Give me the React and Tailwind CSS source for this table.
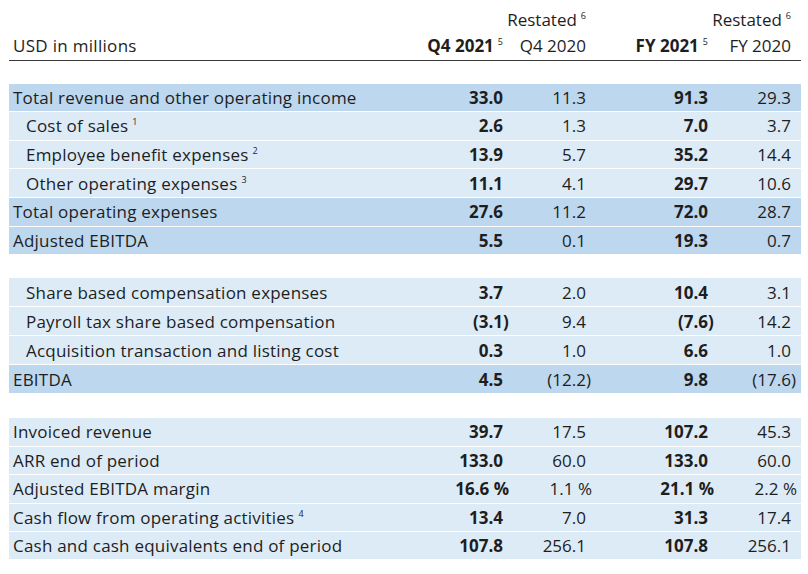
import React from "react";

const DARK = "bg-[#bdd7ee]";
const LIGHT = "bg-[#ddebf7]";

function Sup({ n }) {
  return <span className="relative -top-[7px] ml-[4px] text-[9px]">{n}</span>;
}

function Val({ v, bold }) {
  const w = bold ? "font-bold" : "";
  if (v.startsWith("(")) {
    return (
      <span className={w}>
        {v.slice(0, -1)}
        <span className="inline-block w-0">)</span>
      </span>
    );
  }
  if (v.endsWith("%")) {
    return <span className={`${w} mr-[-6px]`}>{v}</span>;
  }
  return <span className={w}>{v}</span>;
}

function Row({ label, sup, vals, dark, indent, h }) {
  return (
    <div className={`flex ${h} items-center ${dark ? DARK : LIGHT}`}>
      <div className={`flex-1 whitespace-nowrap tracking-[0.22px] ${indent ? "pl-[17px]" : "pl-[4px]"}`}>
        {label}
        {sup && <Sup n={sup} />}
      </div>
      <div className="w-[90px] text-right whitespace-nowrap"><Val v={vals[0]} bold /></div>
      <div className="w-[83px] text-right whitespace-nowrap"><Val v={vals[1]} /></div>
      <div className="w-[122px] text-right whitespace-nowrap"><Val v={vals[2]} bold /></div>
      <div className="w-[83px] text-right whitespace-nowrap"><Val v={vals[3]} /></div>
      <div className="w-[10px]" />
    </div>
  );
}

const s1 = [
  { label: "Total revenue and other operating income", vals: ["33.0", "11.3", "91.3", "29.3"], dark: true },
  { label: "Cost of sales", sup: "1", vals: ["2.6", "1.3", "7.0", "3.7"], indent: true },
  { label: "Employee benefit expenses", sup: "2", vals: ["13.9", "5.7", "35.2", "14.4"], indent: true },
  { label: "Other operating expenses", sup: "3", vals: ["11.1", "4.1", "29.7", "10.6"], indent: true },
  { label: "Total operating expenses", vals: ["27.6", "11.2", "72.0", "28.7"], dark: true },
  { label: "Adjusted EBITDA", vals: ["5.5", "0.1", "19.3", "0.7"], dark: true },
];
const s2 = [
  { label: "Share based compensation expenses", vals: ["3.7", "2.0", "10.4", "3.1"], indent: true },
  { label: "Payroll tax share based compensation", vals: ["(3.1)", "9.4", "(7.6)", "14.2"], indent: true },
  { label: "Acquisition transaction and listing cost", vals: ["0.3", "1.0", "6.6", "1.0"], indent: true },
  { label: "EBITDA", vals: ["4.5", "(12.2)", "9.8", "(17.6)"], dark: true },
];
const s3 = [
  { label: "Invoiced revenue", vals: ["39.7", "17.5", "107.2", "45.3"] },
  { label: "ARR end of period", vals: ["133.0", "60.0", "133.0", "60.0"] },
  { label: "Adjusted EBITDA margin", vals: ["16.6 %", "1.1 %", "21.1 %", "2.2 %"] },
  { label: "Cash flow from operating activities", sup: "4", vals: ["13.4", "7.0", "31.3", "17.4"] },
  { label: "Cash and cash equivalents end of period", vals: ["107.8", "256.1", "107.8", "256.1"] },
];

function Section({ rows, className, h }) {
  return (
    <div className={`flex flex-col gap-px ${className}`}>
      {rows.map((r, i) => (
        <Row key={i} {...r} h={h} />
      ))}
    </div>
  );
}

export default function App() {
  return (
    <div
      className="w-[808px] h-[574px] bg-white text-[#1e1e1e] text-[17px] overflow-hidden"
      style={{ fontFamily: "'Open Sans', 'Noto Sans', sans-serif" }}
    >
      <div className="ml-[9px] w-[792px] pt-[8px]">
        <div className="border-b-[1.5px] border-[#3a3a3a]">
          <div className="flex h-[24px] items-center">
            <div className="flex-1" />
            <div className="w-[90px]" />
            <div className="w-[83px] text-right whitespace-nowrap">Restated<Sup n="6" /></div>
            <div className="w-[122px]" />
            <div className="w-[83px] text-right whitespace-nowrap">Restated<Sup n="6" /></div>
            <div className="w-[10px]" />
          </div>
          <div className="flex h-[28px] items-center">
            <div className="flex-1 pl-[4px] tracking-[0.3px]">USD in millions</div>
            <div className="w-[90px] text-right whitespace-nowrap"><span className="font-bold">Q4 2021</span><Sup n="5" /></div>
            <div className="w-[83px] text-right whitespace-nowrap">Q4 2020</div>
            <div className="w-[122px] text-right whitespace-nowrap"><span className="font-bold">FY 2021</span><Sup n="5" /></div>
            <div className="w-[83px] text-right whitespace-nowrap">FY 2020</div>
            <div className="w-[10px]" />
          </div>
        </div>
        <Section rows={s1} className="mt-[22.5px]" h="h-[27.67px]" />
        <Section rows={s2} className="mt-[24px]" h="h-[28px]" />
        <Section rows={s3} className="mt-[25px]" h="h-[27.4px]" />
      </div>
    </div>
  );
}
